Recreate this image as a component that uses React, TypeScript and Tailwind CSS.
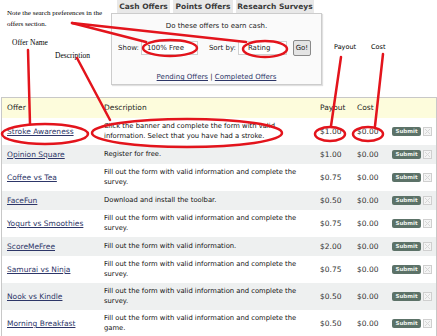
const offers = [
  { name: 'Stroke Awareness', desc: 'Click the banner and complete the form with valid information. Select that you have had a stroke.', payout: '$1.00', tall: true },
  { name: 'Opinion Square', desc: 'Register for free.', payout: '$1.00', tall: false },
  { name: 'Coffee vs Tea', desc: 'Fill out the form with valid information and complete the survey.', payout: '$0.75', tall: true },
  { name: 'FaceFun', desc: 'Download and install the toolbar.', payout: '$0.50', tall: false },
  { name: 'Yogurt vs Smoothies', desc: 'Fill out the form with valid information and complete the survey.', payout: '$0.75', tall: true },
  { name: 'ScoreMeFree', desc: 'Fill out the form with valid information.', payout: '$2.00', tall: false },
  { name: 'Samurai vs Ninja', desc: 'Fill out the form with valid information and complete the survey.', payout: '$0.75', tall: true },
  { name: 'Nook vs Kindle', desc: 'Fill out the form with valid information and complete the survey.', payout: '$0.50', tall: true },
  { name: 'Morning Breakfast', desc: 'Fill out the form with valid information and complete the game.', payout: '$0.50', tall: true },
];

const verdana = "font-['DejaVu_Sans',Verdana,sans-serif]";
const serif = "font-['Liberation_Serif','Times_New_Roman',serif]";

function Annotations() {
  const red = '#e3141c';
  return (
    <svg className="absolute inset-0 pointer-events-none" width="437" height="336" viewBox="0 0 437 336" fill="none">
      <g stroke={red} strokeWidth="2.5" strokeLinecap="round">
        {/* note -> search preferences */}
        <line x1="72" y1="23" x2="146" y2="42" />
        <line x1="72" y1="23" x2="246" y2="42" />
        <ellipse cx="170" cy="48" rx="27" ry="8" />
        <ellipse cx="265" cy="49" rx="22" ry="8" />
        {/* offer name */}
        <line x1="28" y1="50" x2="30" y2="124" />
        <ellipse cx="45" cy="134" rx="43" ry="10" />
        {/* description */}
        <line x1="77" y1="58" x2="110" y2="120" />
        <ellipse cx="187" cy="133" rx="95" ry="14" />
        {/* payout / cost */}
        <line x1="341" y1="57" x2="331" y2="126" />
        <ellipse cx="330" cy="134" rx="15" ry="7" />
        <line x1="383" y1="54" x2="375" y2="126" />
        <ellipse cx="368" cy="134" rx="15" ry="7" />
      </g>
    </svg>
  );
}

function OfferRow({ offer, shaded }: { offer: (typeof offers)[number]; shaded: boolean }) {
  return (
    <div
      className={`grid grid-cols-[97px_216px_37px_35px_35px_14px] items-center ${
        offer.tall ? 'h-[27px]' : 'h-[19px]'
      } ${shaded ? 'bg-[#eef0f0]' : 'bg-white'}`}
    >
      <div className="pl-[5px] text-[7.5px] leading-[11px] text-[#2d3668] underline whitespace-nowrap">{offer.name}</div>
      <div className="pl-[5px] pr-[18px] text-[6.8px] leading-[9.5px] text-[#111]">{offer.desc}</div>
      <div className="pl-[5px] text-[7.5px] text-[#333]">{offer.payout}</div>
      <div className="pl-[5px] text-[7.5px] text-[#333]">$0.00</div>
      <div className="pl-[5px]">
        <div className="w-[29px] h-[9px] rounded-[2px] bg-[#5c7268] text-[#eef2ee] text-[5.5px] font-bold leading-[9px] text-center">
          Submit
        </div>
      </div>
      <div className="pl-[1px]">
        <div className="relative w-[9px] h-[9px] border border-[#cfcfcf] bg-[#f4f4f4] overflow-hidden">
          <svg className="absolute inset-0" width="7" height="7" viewBox="0 0 7 7">
            <path d="M1 1L6 6M6 1L1 6" stroke="#d6d6d6" strokeWidth="1" />
          </svg>
        </div>
      </div>
    </div>
  );
}

export default function App() {
  return (
    <div className={`relative w-[437px] h-[336px] bg-white overflow-hidden text-[#222] ${verdana}`}>
      {/* Top: note + offers search panel */}
      <div className="flex h-[97px]">
        <div className="w-[111px] pl-[7px] pt-[8px]">
          <p className={`w-[97px] text-[7px] leading-[11px] text-black ${serif}`}>
            Note the search preferences in the offers section.
          </p>
        </div>

        <div className="w-[211px] flex flex-col">
          <div className="flex h-[13px] pl-[6px] gap-[3px]">
            <div className="w-[53px] bg-[#e8e8e8] text-[7.5px] font-bold text-[#3a3a3a] leading-[13px] text-center">Cash Offers</div>
            <div className="w-[60px] bg-[#e8e8e8] text-[7.5px] font-bold text-[#3a3a3a] leading-[13px] text-center">Points Offers</div>
            <div className="w-[78px] bg-[#e8e8e8] text-[7.5px] font-bold text-[#3a3a3a] leading-[13px] text-center">Research Surveys</div>
          </div>
          <div className="h-[72px] border border-[#cccccc] bg-[#fafafa] shadow-[1px_1px_1px_rgba(0,0,0,0.12)] flex flex-col items-center text-[7px]">
            <div className="pt-[7px] leading-[10px]">Do these offers to earn cash.</div>
            <div className="mt-[9px] w-full flex items-center pl-[6px] h-[16px]">
              <span>Show:</span>
              <div className="ml-[2px] w-[57px] h-[14px] border border-[#d0d0d0] bg-white pl-[5px] leading-[12px]">100% Free</div>
              <span className="ml-[11px]">Sort by:</span>
              <div className="ml-[2px] w-[49px] h-[14px] border border-[#d0d0d0] bg-white pl-[9px] leading-[12px]">Rating</div>
              <div className="ml-[6px] w-[18px] h-[16px] border border-[#8a8a8a] rounded-[2px] bg-[#e4e4e4] text-center leading-[14px]">Go!</div>
            </div>
            <div className="mt-[16px] text-[#2d3668]">
              <span className="underline">Pending Offers</span>
              <span className="text-[#222]"> | </span>
              <span className="underline">Completed Offers</span>
            </div>
          </div>
        </div>
      </div>

      {/* Offers table */}
      <div className="ml-[1px] w-[436px] border-x border-t border-[#c8c8c8]">
        <div className="grid grid-cols-[97px_216px_37px_35px_35px_14px] items-center h-[20px] bg-[#fdfcdc] text-[7.5px] text-[#1e1e1e]">
          <div className="pl-[5px]">Offer</div>
          <div className="pl-[5px]">Description</div>
          <div className="pl-[5px]">Payout</div>
          <div className="pl-[5px]">Cost</div>
          <div />
          <div />
        </div>
        {offers.map((o, i) => (
          <OfferRow key={o.name} offer={o} shaded={i % 2 === 1} />
        ))}
      </div>

      {/* Callout labels */}
      <span className={`absolute left-[12px] top-[37px] text-[7.5px] text-black ${serif}`}>Offer Name</span>
      <span className={`absolute left-[55px] top-[50px] text-[7.5px] text-black ${serif}`}>Description</span>
      <span className={`absolute left-[334px] top-[43px] text-[6.5px] text-black ${verdana}`}>Payout</span>
      <span className={`absolute left-[371px] top-[43px] text-[6.5px] text-black ${verdana}`}>Cost</span>

      <Annotations />
    </div>
  );
}
